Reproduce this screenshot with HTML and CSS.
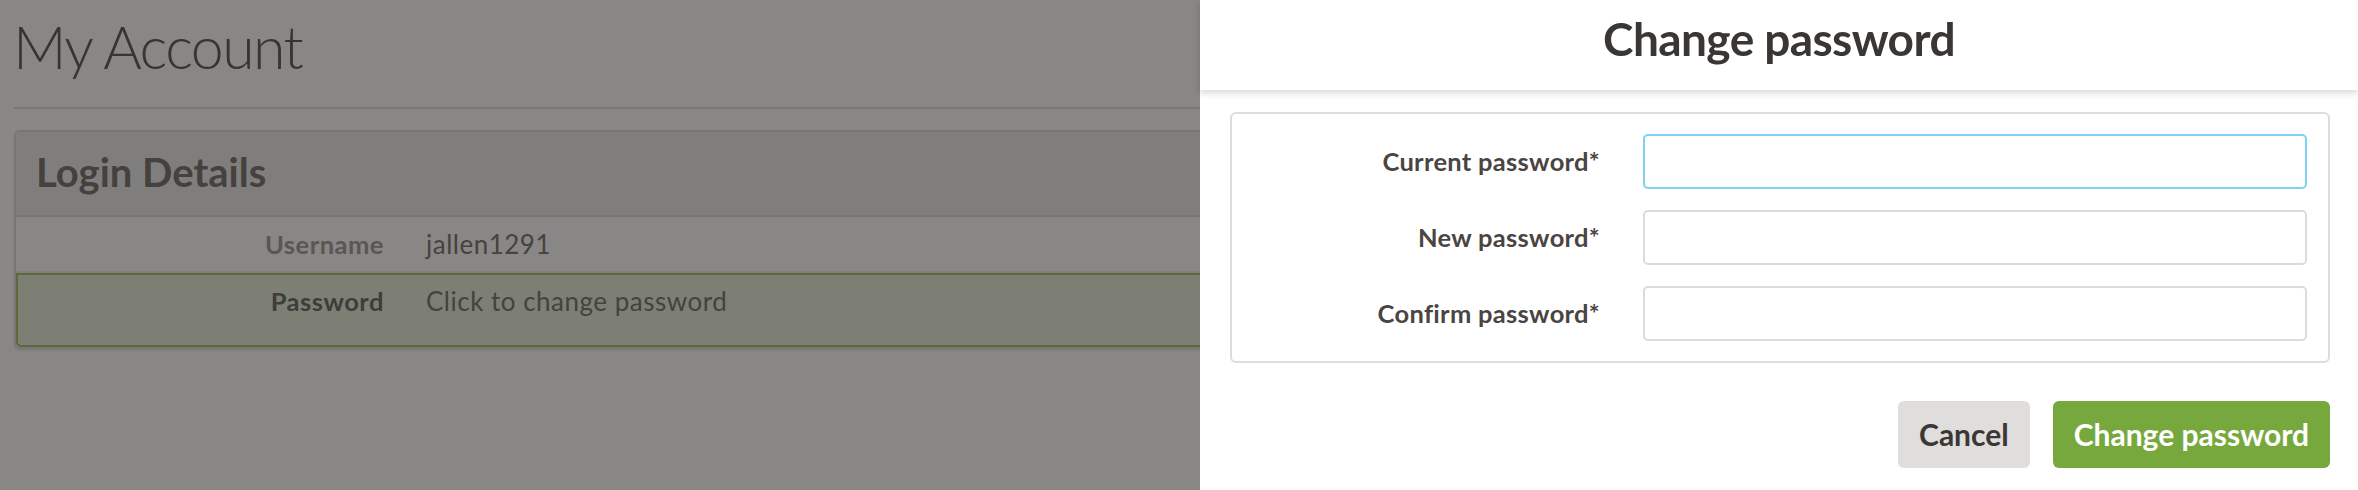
FILE: index.html
```html
<!DOCTYPE html>
<html lang="en">
<head>
<meta charset="utf-8">
<title>My Account – Change password</title>
<link rel="stylesheet" href="styles.css">
</head>
<body>
<div class="page">
  <header class="page-head"><h1 class="page-title">My Account</h1></header>
  <section class="panel">
    <div class="panel-heading"><h2 class="panel-title">Login Details</h2></div>
    <div class="row">
      <span class="row-label">Username</span>
      <span class="row-value">jallen1291</span>
    </div>
    <div class="row row-active">
      <span class="row-label">Password</span>
      <span class="row-value">Click to change password</span>
    </div>
  </section>
</div>

<aside class="modal">
  <div class="modal-head"><h2 class="modal-title">Change password</h2></div>
  <div class="modal-body">
    <form class="form-box">
      <label class="f-label" for="cur">Current password*</label>
      <input id="cur" class="f-input f-focus" type="password">
      <label class="f-label" for="new">New password*</label>
      <input id="new" class="f-input" type="password">
      <label class="f-label" for="conf">Confirm password*</label>
      <input id="conf" class="f-input" type="password">
    </form>
    <div class="actions">
      <button class="btn btn-cancel" type="button">Cancel</button>
      <button class="btn btn-primary" type="button">Change password</button>
    </div>
  </div>
</aside>
</body>
</html>
```

FILE: styles.css
```css
* { box-sizing: border-box; }

html, body {
  margin: 0;
  height: 490px;
  overflow: hidden;
}

body {
  background: #888785;
  font-family: Lato, "Noto Sans", sans-serif;
  color: #3b3836;
}

/* ---------- background page (dimmed) ---------- */
.page {
  padding-left: 14px;
}

.page-head {
  padding-top: 11px;
  padding-bottom: 25px;
  border-bottom: 2px solid #7a7977;
  margin-left: -1px;
}

.page-title {
  margin: 0;
  font-size: 59px;
  font-weight: 300;
  line-height: 71px;
  color: #38352f;
  letter-spacing: -1.6px;
}

.panel {
  margin-top: 21px;
  border: 2px solid #777674;
  border-radius: 6px;
  box-shadow: 0 2px 2px rgba(0, 0, 0, 0.08);
}

.panel-heading {
  background: #7f7e7c;
  padding: 16px 20px 19px 20px;
  border-bottom: 2px solid #767573;
  border-radius: 5px 5px 0 0;
}

.panel-title {
  margin: 0;
  font-size: 40px;
  font-weight: 700;
  line-height: 48px;
  color: #44413e;
}

.row {
  display: grid;
  grid-template-columns: 368px 1fr;
  column-gap: 42px;
  padding: 12px 0 11px 0;
  border-bottom: 2px solid #81807e;
  line-height: 31px;
}

.row-label {
  text-align: right;
  font-size: 25.5px;
  font-weight: 700;
  letter-spacing: 0.5px;
  color: #595654;
}

.row-value {
  font-size: 26px;
  letter-spacing: 0.5px;
  color: #45423f;
}

.row-active {
  border-bottom: 0;
  outline: 2px solid #5a6a3a;
  outline-offset: -2px;
  background: #7d7f75;
  padding: 13px 0 30px 0;
  border-radius: 0 0 5px 5px;
}

.row-active .row-label {
  color: #3f3c39;
}

/* ---------- side modal ---------- */
.modal {
  position: fixed;
  top: 0;
  right: 0;
  bottom: 0;
  width: 1158px;
  background: #ffffff;
}

.modal-head {
  height: 90px;
  padding-top: 11px;
  text-align: center;
  box-shadow: 0 3px 7px rgba(0, 0, 0, 0.16);
  position: relative;
}

.modal-title {
  margin: 0;
  font-size: 46px;
  font-weight: 700;
  line-height: 55px;
  color: #3a3634;
  letter-spacing: -0.6px;
}

.modal-body {
  padding: 22px 28px 0 30px;
}

.form-box {
  display: grid;
  grid-template-columns: 368px 1fr;
  column-gap: 43px;
  row-gap: 21px;
  align-items: center;
  padding: 20px 21px 20px 0;
  border: 2px solid #dedddd;
  border-radius: 6px;
}

.f-label {
  text-align: right;
  font-size: 25.5px;
  font-weight: 700;
  line-height: 31px;
  letter-spacing: 0.3px;
  color: #4a4542;
}

.f-input {
  display: block;
  width: 100%;
  height: 55px;
  margin: 0;
  border: 2px solid #dcdadb;
  border-radius: 5px;
  background: #fff;
  font: inherit;
  outline: none;
}

.f-focus {
  border-color: #7dd3f1;
}

.actions {
  display: flex;
  justify-content: flex-end;
  gap: 23px;
  margin-top: 38px;
}

.btn {
  height: 67px;
  padding: 0 21px;
  border: 0;
  border-radius: 6px;
  font-family: inherit;
  font-size: 30px;
  font-weight: 700;
  line-height: 67px;
}

.btn-cancel {
  background: #e0dddd;
  color: #3b3735;
}

.btn-primary {
  background: #77a83d;
  color: #ffffff;
}
```
